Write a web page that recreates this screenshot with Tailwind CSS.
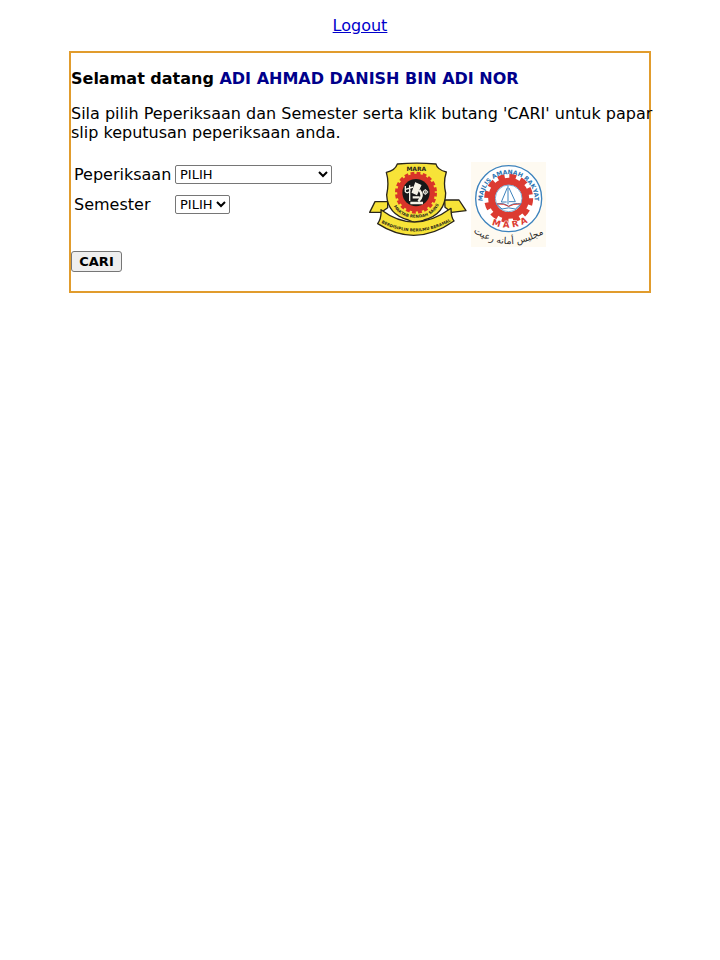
<!DOCTYPE html>
<html lang="ms">
<head>
<meta charset="utf-8">
<meta name="viewport" content="width=device-width, initial-scale=1">
<title>Slip Keputusan Peperiksaan</title>
<script src="https://cdn.jsdelivr.net/npm/@tailwindcss/browser@4"></script>
</head>
<body class="bg-white px-[69px] py-4 font-['DejaVu_Sans',sans-serif] text-base leading-[19px] text-black">
<nav class="text-center"><a href="#" class="text-[#0000cc] underline">Logout</a></nav>
<main class="mt-4 border-2 border-[#e19c2d] pt-4 pb-[19px]">
  <h1 class="font-bold">Selamat datang <span class="text-[#00008b]">ADI AHMAD DANISH BIN ADI NOR</span></h1>
  <p class="mt-4 -mr-1">Sila pilih Peperiksaan dan Semester serta klik butang 'CARI' untuk papar slip keputusan peperiksaan anda.</p>
  <form>
    <div class="mt-5 flex items-start">
      <div class="grid w-[298px] grid-cols-[97px_auto] items-center justify-items-start gap-x-1 gap-y-[11px] pt-[3px] pl-[3px]">
        <label for="exam">Peperiksaan</label>
        <select id="exam" class="h-[19px] w-[157px] rounded-xs border border-[#767676] bg-white text-[13px] leading-4"><option>PILIH</option></select>
        <label for="sem">Semester</label>
        <select id="sem" class="h-[19px] w-[55px] rounded-xs border border-[#767676] bg-white text-[13px] leading-4"><option>PILIH</option></select>
      </div>
      <div class="flex items-start gap-1">
        <svg class="h-[76px] w-[98px]" viewBox="12 21 294 228" role="img" aria-label="Lencana MRSM">
          <defs>
            <path id="motto" d="M78 130Q90 188 153 188Q216 188 229 125"/>
            <path id="banner" d="M42 199Q150 262 265 194"/>
          </defs>
          <g fill="#f7e338" stroke="#29251a" stroke-width="4" stroke-linejoin="round">
            <path d="M68 140H30L14 172H49L68 158Z"/>
            <path d="M239 135H282L303 167L260 172L240 157Z"/>
            <path d="M97 27Q155 22 213 27Q216 44 244 51Q234 82 242 114Q241 178 177 195L154 205L130 195Q68 178 65 120Q73 82 64 52Q90 47 97 27Z"/>
            <path d="M48 164Q149 240 258 160Q258 188 267 198Q151 280 38 206Q50 190 48 164Z"/>
          </g>
          <circle cx="153" cy="113" r="56" fill="none" stroke="#d93429" stroke-width="14" stroke-dasharray="11 6.6"/>
          <circle cx="153" cy="113" r="48" fill="none" stroke="#d93429" stroke-width="17"/>
          <circle cx="153" cy="113" r="41" fill="#171819"/>
          <g fill="none" stroke="#f5f2e7" stroke-width="4">
            <path d="M121 93V110Q128 118 136 106M134 91V138M119 104L145 96"/>
            <path d="M152 84L167 91L155 118L142 112Z" fill="#f5f2e7"/>
            <path d="M163 105Q178 122 160 139M143 127H164M136 144H174" stroke-width="7"/>
            <circle cx="181" cy="111" r="6" stroke-width="3"/>
            <path d="M172 111H190M181 102V120" stroke-width="2"/>
          </g>
          <g fill="#29251a" font-family="DejaVu Sans, sans-serif" font-weight="700">
            <text x="154" y="49" text-anchor="middle" font-size="18">MARA</text>
            <text font-size="12"><textPath href="#motto" startOffset="50%" text-anchor="middle">MAKTAB RENDAH SAINS</textPath></text>
            <text font-size="12"><textPath href="#banner" startOffset="50%" text-anchor="middle">BERDISIPLIN BERILMU BERAMAL</textPath></text>
          </g>
        </svg>
        <svg class="h-[85px] w-[75px]" viewBox="18 21 225 255" role="img" aria-label="Majlis Amanah Rakyat">
          <defs>
            <path id="majlis" d="M54 148A78 78 0 1 1 208 148"/>
            <path id="mara" d="M68 203Q131 236 200 196"/>
            <path id="jawi" d="M20 228Q126 304 242 232"/>
          </defs>
          <path fill="#fefaf1" d="M18 21H243V276H18Z"/>
          <circle cx="131" cy="131" r="99" fill="#fff" stroke="#3d83bd" stroke-width="4"/>
          <circle cx="131" cy="130" r="65" fill="none" stroke="#dc3b32" stroke-width="17" stroke-dasharray="20 14.03"/>
          <circle cx="131" cy="130" r="51" fill="#fff" stroke="#dc3b32" stroke-width="21"/>
          <circle cx="131" cy="130" r="40" fill="#fff" stroke="#3d83bd" stroke-width="2"/>
          <g fill="none" stroke="#3d83bd" stroke-width="3">
            <path d="M129 91V148M127 98L109 141H125M132 99L151 140H132"/>
            <path d="M94 147Q116 142 131 154Q145 142 168 147L151 162Q131 155 111 162Z" fill="#fff"/>
            <path d="M96 147Q117 145 131 154Q145 146 166 147" stroke="#dc3b32"/>
          </g>
          <g font-family="DejaVu Sans, sans-serif" font-weight="700">
            <text font-size="18" fill="#2874b2"><textPath href="#majlis" startOffset="50%" text-anchor="middle">MAJLIS AMANAH RAKYAT</textPath></text>
            <text font-size="26" fill="#dc3b32" stroke="#fff" stroke-width="3" paint-order="stroke"><textPath href="#mara" startOffset="50%" text-anchor="middle">M A R A</textPath></text>
            <text font-size="28" font-weight="400" fill="#292828"><textPath href="#jawi" startOffset="50%" text-anchor="middle">مجليس أمانه رعيت</textPath></text>
          </g>
        </svg>
      </div>
    </div>
    <button type="button" class="mt-1 block h-[21px] min-w-[51px] rounded-[3px] border border-[#767676] bg-[#efefef] px-[7px] text-[13px] leading-4 font-bold">CARI</button>
  </form>
</main>
</body>
</html>
